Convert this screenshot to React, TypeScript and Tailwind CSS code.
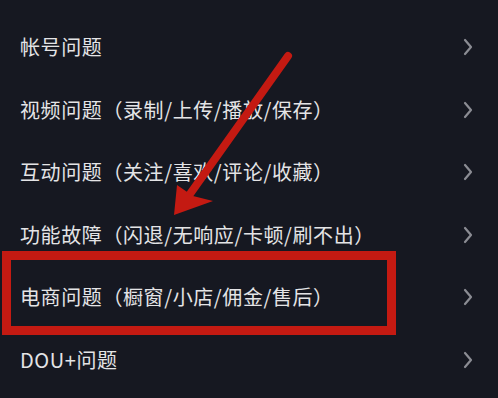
import React from 'react';

const items = [
  '帐号问题',
  '视频问题（录制/上传/播放/保存）',
  '互动问题（关注/喜欢/评论/收藏）',
  '功能故障（闪退/无响应/卡顿/刷不出）',
  '电商问题（橱窗/小店/佣金/售后）',
  'DOU+问题',
];

const Chevron = () => (
  <svg width="10" height="18" viewBox="0 0 10 18" fill="none">
    <polyline
      points="2,2 8,9 2,16"
      stroke="#8b8c93"
      strokeWidth="2.2"
      strokeLinecap="round"
      strokeLinejoin="round"
    />
  </svg>
);

const App = () => {
  return (
    <div
      className="relative h-[398px] w-[498px] overflow-hidden bg-[#161821] pt-[16px]"
      style={{ fontFamily: '"Noto Sans CJK SC", "Noto Sans", sans-serif' }}>
      <ul>
        {items.map((text) => (
          <li key={text} className="flex h-[62.5px] items-center justify-between pl-[20px] pr-[25px]">
            <span className="text-[20px] leading-none tracking-[0.6px] text-[#e4e4e6]">{text}</span>
            <Chevron />
          </li>
        ))}
      </ul>

      {/* annotation: box round the shop row */}
      <div className="absolute left-[2px] top-[251px] h-[84px] w-[394px] border-[9px] border-[#c41a12]" />

      {/* annotation: arrow */}
      <svg className="absolute left-0 top-0" width="498" height="398" viewBox="0 0 498 398">
        <line x1="288" y1="56" x2="190" y2="194" stroke="#c41a12" strokeWidth="8" strokeLinecap="round" />
        <polygon points="174,215 177,185 193,196 213,201" fill="#c41a12" />
      </svg>
    </div>
  );
};

export default App;
